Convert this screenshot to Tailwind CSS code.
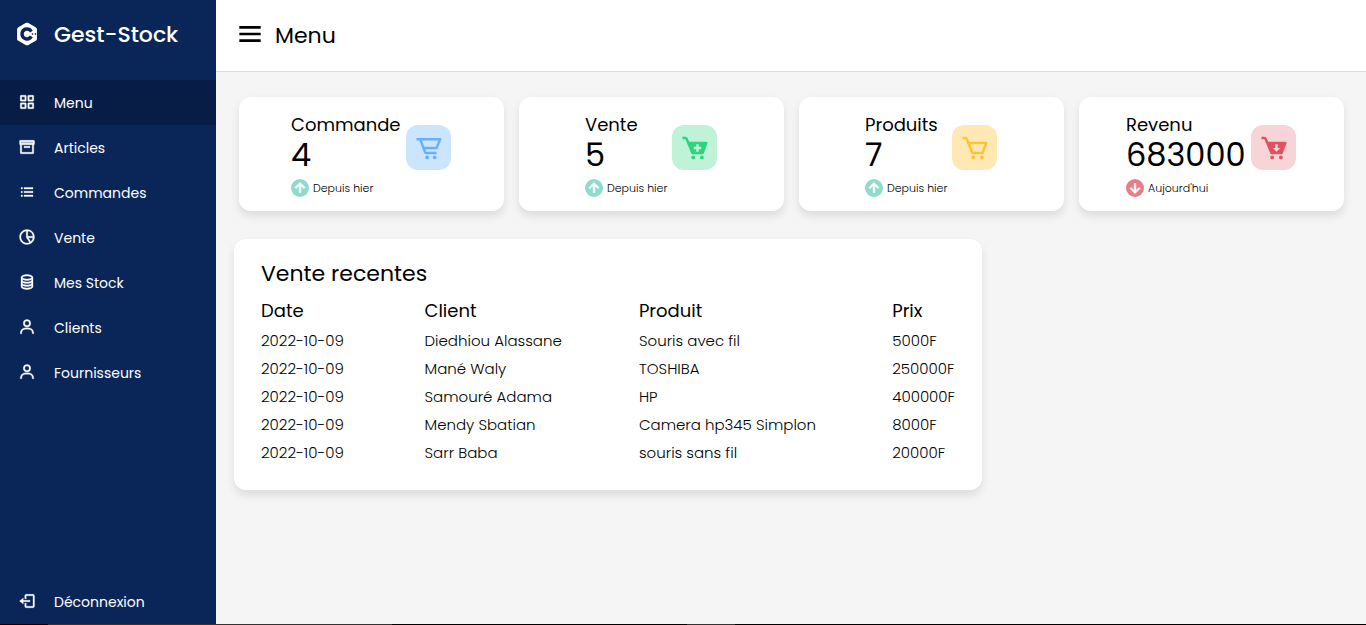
<!DOCTYPE html>
<html lang="fr">
<head>
<meta charset="utf-8">
<meta name="viewport" content="width=device-width, initial-scale=1">
<title>Gest-Stock</title>
<script src="https://cdn.jsdelivr.net/npm/@tailwindcss/browser@4"></script>
</head>
<body class="flex min-h-screen flex-col bg-[#f5f5f5] font-['Poppins','Inter',sans-serif] text-black">
<svg class="hidden" aria-hidden="true">
  <symbol id="up" viewBox="0 0 24 24"><path stroke="#fff" d="M11 8.414V18h2V8.414l4.293 4.293 1.414-1.414L12 4.586l-6.707 6.707 1.414 1.414z"/></symbol>
  <symbol id="user" viewBox="0 0 24 24"><path d="M12 2a5 5 0 1 0 5 5 5 5 0 0 0-5-5zm0 8a3 3 0 1 1 3-3 3 3 0 0 1-3 3zm9 11v-1a7 7 0 0 0-7-7h-4a7 7 0 0 0-7 7v1h2v-1a5 5 0 0 1 5-5h4a5 5 0 0 1 5 5v1z"/></symbol>
</svg>
<div class="flex flex-1">
  <aside class="flex w-[216px] shrink-0 flex-col bg-[#0a2558] text-white">
    <div class="flex h-20 items-start">
      <svg class="mx-[13px] mt-5 size-7 shrink-0" viewBox="0 0 24 24" fill="currentColor"><path fill-rule="evenodd" d="M12 2.3c.5 0 .9.1 1.2.3l6.2 3.6c.7.4 1.1 1 1.1 1.8v8c0 .8-.4 1.4-1.1 1.8l-6.2 3.6c-.7.4-1.7.4-2.4 0l-6.2-3.6c-.7-.4-1.1-1-1.1-1.8V8c0-.8.4-1.4 1.1-1.8l6.2-3.6c.3-.2.7-.3 1.2-.3zM12 6.300a5.700 5.700 0 1 0 4.950 8.520l-2.500-1.430a2.800 2.800 0 1 1 0-2.780l2.500-1.430A5.700 5.700 0 0 0 12 6.300z"/><path d="M15.700 11.700h.600v-.600h.600v.600h.600v.600h-.600v.600h-.600v-.600h-.600zm2.600 0h.600v-.600h.600v.600h.600v.600h-.600v.600h-.600v-.600h-.600z" fill="#0a2558"/></svg>
      <span class="pt-[17px] text-[22px] leading-9 font-medium">Gest-Stock</span>
    </div>
    <nav class="flex flex-1 flex-col text-sm">
      <a href="#" class="flex h-[45px] items-center bg-[#081d45]"><svg class="mx-[18px] mb-px size-[18px]" viewBox="0 0 24 24" fill="currentColor" stroke="currentColor" stroke-width=".4"><path fill-rule="evenodd" d="M4 3h6a1 1 0 0 1 1 1v6a1 1 0 0 1-1 1H4a1 1 0 0 1-1-1V4a1 1 0 0 1 1-1zM5 5v4h4V5zM14 3h6a1 1 0 0 1 1 1v6a1 1 0 0 1-1 1h-6a1 1 0 0 1-1-1V4a1 1 0 0 1 1-1zM15 5v4h4V5zM4 13h6a1 1 0 0 1 1 1v6a1 1 0 0 1-1 1H4a1 1 0 0 1-1-1v-6a1 1 0 0 1 1-1zM5 15v4h4v-4zM14 13h6a1 1 0 0 1 1 1v6a1 1 0 0 1-1 1h-6a1 1 0 0 1-1-1v-6a1 1 0 0 1 1-1zM15 15v4h4v-4z"/></svg>Menu</a>
      <a href="#" class="flex h-[45px] items-center"><svg class="mx-[18px] mb-px size-[18px]" viewBox="0 0 24 24" fill="currentColor" stroke="currentColor" stroke-width=".4"><path fill-rule="evenodd" d="M21 3H3a1 1 0 0 0-1 1v4a1 1 0 0 0 1 1v11a1 1 0 0 0 1 1h16a1 1 0 0 0 1-1V9a1 1 0 0 0 1-1V4a1 1 0 0 0-1-1zM4 5v2h16V5zM5 9v10h14V9z"/><path d="M3 4h18v4H3z" opacity=".6"/><path d="M8 11h8v2H8z"/></svg>Articles</a>
      <a href="#" class="flex h-[45px] items-center"><svg class="mx-[18px] mb-px size-[18px]" viewBox="0 0 24 24" fill="currentColor" stroke="currentColor" stroke-width=".4"><path d="M4 6h2v2H4zm0 5h2v2H4zm0 5h2v2H4zM8 6h12v2H8zm0 5h12v2H8zm0 5h12v2H8z"/></svg>Commandes</a>
      <a href="#" class="flex h-[45px] items-center"><svg class="mx-[18px] mb-px size-[18px]" viewBox="0 0 24 24" fill="currentColor" stroke="currentColor" stroke-width=".4"><path d="M12 2C6.486 2 2 6.486 2 12s4.486 10 10 10 10-4.486 10-10S17.514 2 12 2zm7.931 9H13V4.069A8.008 8.008 0 0 1 19.931 11zM4 12c0-4.072 3.061-7.436 7-7.931V12a.996.996 0 0 0 .111.438c.015.03.022.063.041.093l4.202 6.723A7.949 7.949 0 0 1 12 20c-4.411 0-8-3.589-8-8zm13.052 6.196L13.805 13h6.126a7.992 7.992 0 0 1-2.879 5.196z"/></svg>Vente</a>
      <a href="#" class="flex h-[45px] items-center"><svg class="mx-[18px] mb-px size-[18px]" viewBox="0 0 24 24" fill="currentColor" stroke="currentColor" stroke-width=".4"><path d="M12 22c3.976 0 8-1.374 8-4V6c0-2.626-4.024-4-8-4S4 3.374 4 6v12c0 2.626 4.024 4 8 4zm0-2c-3.722 0-6-1.295-6-2v-1.268C7.541 17.57 9.777 18 12 18s4.459-.43 6-1.268V18c0 .705-2.278 2-6 2zm0-16c3.722 0 6 1.295 6 2s-2.278 2-6 2-6-1.295-6-2 2.278-2 6-2zM6 8.732C7.541 9.57 9.777 10 12 10s4.459-.43 6-1.268V10c0 .705-2.278 2-6 2s-6-1.295-6-2V8.732zm0 4C7.541 13.57 9.777 14 12 14s4.459-.43 6-1.268V14c0 .705-2.278 2-6 2s-6-1.295-6-2v-1.268z"/></svg>Mes Stock</a>
      <a href="#" class="flex h-[45px] items-center"><svg class="mx-[18px] mb-px size-[18px]" fill="currentColor" stroke="currentColor" stroke-width=".4"><use href="#user"/></svg>Clients</a>
      <a href="#" class="flex h-[45px] items-center"><svg class="mx-[18px] mb-px size-[18px]" fill="currentColor" stroke="currentColor" stroke-width=".4"><use href="#user"/></svg>Fournisseurs</a>
      <a href="#" class="mt-auto flex h-[45px] items-center"><svg class="mx-[18px] mb-px size-[18px]" viewBox="0 0 24 24" fill="currentColor" stroke="currentColor" stroke-width=".4"><path d="m2 12 5 4v-3h9v-2H7V8z"/><path d="M20 3h-9c-1.103 0-2 .897-2 2v4h2V5h9v14h-9v-4H9v4c0 1.103.897 2 2 2h9c1.103 0 2-.897 2-2V5c0-1.103-.897-2-2-2z"/></svg>Déconnexion</a>
    </nav>
  </aside>

  <div class="flex min-w-0 flex-1 flex-col">
    <header class="flex h-[72px] items-center border-b border-[#dcdcdc] bg-white pl-[18px] text-[22px]">
      <button type="button" aria-label="Ouvrir le menu" class="mr-[9px] mb-1"><svg class="size-8" viewBox="0 0 24 24"><path d="M4 6h16v2H4zm0 5h16v2H4zm0 5h16v2H4z"/></svg></button>
      <h1>Menu</h1>
    </header>

    <main class="pt-[25px] pb-8">
      <section class="grid grid-cols-4 gap-[15px] pr-[22px] pl-[23px]">
        <article class="flex h-[114px] items-center justify-center rounded-xl bg-white pr-px shadow-[0_5px_10px_rgba(0,0,0,0.1)]">
          <div class="w-[115px]">
            <h2 class="text-lg leading-7">Commande</h2>
            <p class="text-[32px] leading-8">4</p>
            <p class="mt-2 flex items-center gap-1 text-[11px] leading-[18px] font-light"><svg class="size-[18px] shrink-0 rounded-full bg-[#8fdacb]" fill="#fff"><use href="#up"/></svg>Depuis hier</p>
          </div>
          <span class="mb-[13px] flex size-[45px] items-center justify-center rounded-xl bg-[#cce5ff] text-[#66b0ff]"><svg class="size-[30px]" viewBox="0 0 24 24" fill="currentColor"><path fill-rule="evenodd" d="M21 4H2v2h2.300l3.521 9.683A2.004 2.004 0 0 0 9.700 17H18v-2H9.700l-.728-2H18c.4 0 .762-.238.919-.606l3-7A.998.998 0 0 0 21 4zm-3.659 7H8.246L6.428 6h13.055z"/><circle cx="10.500" cy="19.500" r="1.500"/><circle cx="16.500" cy="19.500" r="1.500"/></svg></span>
        </article>
        <article class="flex h-[114px] items-center justify-center rounded-xl bg-white pr-px shadow-[0_5px_10px_rgba(0,0,0,0.1)]">
          <div class="w-[87px]">
            <h2 class="text-lg leading-7">Vente</h2>
            <p class="text-[32px] leading-8">5</p>
            <p class="mt-2 flex items-center gap-1 text-[11px] leading-[18px] font-light"><svg class="size-[18px] shrink-0 rounded-full bg-[#8fdacb]" fill="#fff"><use href="#up"/></svg>Depuis hier</p>
          </div>
          <span class="mb-[13px] flex size-[45px] items-center justify-center rounded-xl bg-[#c0f2d8] text-[#2bd47d]"><svg class="size-[30px]" viewBox="0 0 24 24" fill="currentColor"><circle cx="10.500" cy="19.500" r="1.500"/><circle cx="17.500" cy="19.500" r="1.500"/><path fill-rule="evenodd" d="M21 7H7.334L6.180 4.230A1.995 1.995 0 0 0 4.333 3H2v2h2.334l4.743 11.385c.155.372.52.615.923.615h8c.417 0 .79-.259.937-.648l3-8A1 1 0 0 0 21 7zm-4 6h-2v2h-2v-2h-2v-2h2V9h2v2h2v2z"/></svg></span>
        </article>
        <article class="flex h-[114px] items-center justify-center rounded-xl bg-white pr-px shadow-[0_5px_10px_rgba(0,0,0,0.1)]">
          <div class="w-[87px]">
            <h2 class="text-lg leading-7">Produits</h2>
            <p class="text-[32px] leading-8">7</p>
            <p class="mt-2 flex items-center gap-1 text-[11px] leading-[18px] font-light"><svg class="size-[18px] shrink-0 rounded-full bg-[#8fdacb]" fill="#fff"><use href="#up"/></svg>Depuis hier</p>
          </div>
          <span class="mb-[13px] flex size-[45px] items-center justify-center rounded-xl bg-[#ffe8b3] text-[#ffc233]"><svg class="size-[30px]" viewBox="0 0 24 24" fill="currentColor"><path d="M21.822 7.431A1 1 0 0 0 21 7H7.333L6.179 4.230A1.994 1.994 0 0 0 4.333 3H2v2h2.333l4.744 11.385A1 1 0 0 0 10 17h8c.417 0 .79-.259.937-.648l3-8a1 1 0 0 0-.115-.921zM17.307 15h-6.640l-2.500-6h11.390l-2.250 6z"/><circle cx="10.500" cy="19.500" r="1.500"/><circle cx="17.500" cy="19.500" r="1.500"/></svg></span>
        </article>
        <article class="flex h-[114px] items-center justify-center rounded-xl bg-white pr-px shadow-[0_5px_10px_rgba(0,0,0,0.1)]">
          <div class="w-[125px]">
            <h2 class="text-lg leading-7">Revenu</h2>
            <p class="text-[32px] leading-8">683000</p>
            <p class="mt-2 flex items-center gap-1 text-[11px] leading-[18px] font-light"><svg class="size-[18px] shrink-0 rotate-180 rounded-full bg-[#e87d88]" fill="#fff"><use href="#up"/></svg>Aujourd'hui</p>
          </div>
          <span class="mb-[13px] flex size-[45px] items-center justify-center rounded-xl bg-[#f7d4d7] text-[#e05260]"><svg class="size-[30px]" viewBox="0 0 24 24" fill="currentColor"><circle cx="10.500" cy="19.500" r="1.500"/><circle cx="17.500" cy="19.500" r="1.500"/><path fill-rule="evenodd" d="M21 7H7.334L6.180 4.230A1.995 1.995 0 0 0 4.333 3H2v2h2.334l4.743 11.385c.155.372.52.615.923.615h8c.417 0 .79-.259.937-.648l3-8A1 1 0 0 0 21 7zm-7 8-3-3h2V9h2v3h2l-3 3z"/></svg></span>
        </article>
      </section>

      <section class="mt-7 ml-[18px] w-[66%] max-w-[748px] rounded-xl bg-white px-[27px] pt-[17px] pb-[23px] shadow-[0_5px_10px_rgba(0,0,0,0.1)]">
        <h2 class="text-[22px] leading-9">Vente recentes</h2>
        <table class="mt-[3px] w-full text-left text-[15px]">
          <thead>
            <tr class="h-8 text-lg"><th class="w-[164px] p-0 font-normal">Date</th><th class="w-[215px] p-0 font-normal">Client</th><th class="w-[254px] p-0 font-normal">Produit</th><th class="p-0 font-normal">Prix</th></tr>
          </thead>
          <tbody class="font-light">
            <tr class="h-7"><td class="p-0">2022-10-09</td><td class="p-0">Diedhiou Alassane</td><td class="p-0">Souris avec fil</td><td class="p-0">5000F</td></tr>
            <tr class="h-7"><td class="p-0">2022-10-09</td><td class="p-0">Mané Waly</td><td class="p-0">TOSHIBA</td><td class="p-0">250000F</td></tr>
            <tr class="h-7"><td class="p-0">2022-10-09</td><td class="p-0">Samouré Adama</td><td class="p-0">HP</td><td class="p-0">400000F</td></tr>
            <tr class="h-7"><td class="p-0">2022-10-09</td><td class="p-0">Mendy Sbatian</td><td class="p-0">Camera hp345 Simplon</td><td class="p-0">8000F</td></tr>
            <tr class="h-7"><td class="p-0">2022-10-09</td><td class="p-0">Sarr Baba</td><td class="p-0">souris sans fil</td><td class="p-0">20000F</td></tr>
          </tbody>
        </table>
      </section>
    </main>
  </div>
</div>
<div class="flex h-px bg-black"><div class="ml-12 w-[344px] bg-[#333]"></div><div class="ml-[295px] w-12 bg-[#333]"></div></div>
</body>
</html>
